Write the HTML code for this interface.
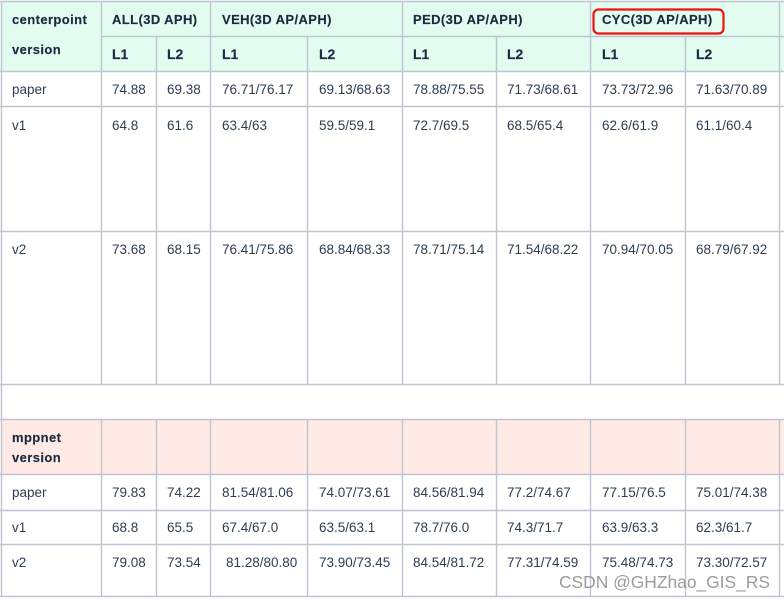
<!DOCTYPE html>
<html><head><meta charset="utf-8"><style>
html,body{margin:0;padding:0;background:#fff;width:784px;height:600px;overflow:hidden}
svg{display:block}
text{font-family:"Liberation Sans",sans-serif;font-size:13.5px;fill:#2c3e50}
.b{font-weight:700;font-size:13px;fill:#1b2a41;letter-spacing:.4px;stroke:#1b2a41;stroke-width:.15px}
.l{font-size:14px;letter-spacing:0}
</style></head><body>
<svg width="784" height="600" viewBox="0 0 784 600" xmlns="http://www.w3.org/2000/svg">
<rect x="1" y="1" width="783" height="70" fill="#e3fcf0"/>
<rect x="1" y="419" width="783" height="55" fill="#ffeae5"/>
<g stroke="#c0c4d0" stroke-width="1.4">
<path d="M1.5 1V597M101.5 1V384M156.5 36V384M210.5 1V384M307.5 36V384M402.5 1V384M496.5 36V384M590.5 1V384M685.5 36V384M779.5 1V384"/>
<path d="M101.5 419V597M156.5 419V597M210.5 419V597M307.5 419V597M402.5 419V597M496.5 419V597M590.5 419V597M685.5 419V597M779.5 419V597"/>
<path d="M0 1.5H784M101 36.5H784M0 71.5H784M0 106.5H784M0 231.5H784M0 384.5H784M0 419.5H784M0 474.5H784M0 510.5H784M0 544.5H784M0 596.5H784"/>
</g>
<g class="h">
<text class="b" x="12" y="24">centerpoint</text><text class="b" x="12" y="54">version</text>
<text class="b" x="112" y="24">ALL(3D APH)</text><text class="b" x="222" y="24">VEH(3D AP/APH)</text><text class="b" x="413" y="24">PED(3D AP/APH)</text><text class="b" x="602" y="24">CYC(3D AP/APH)</text>
<text class="b l" x="112" y="59">L1</text><text class="b l" x="167" y="59">L2</text><text class="b l" x="222" y="59">L1</text><text class="b l" x="319" y="59">L2</text><text class="b l" x="413" y="59">L1</text><text class="b l" x="507" y="59">L2</text><text class="b l" x="602" y="59">L1</text><text class="b l" x="696" y="59">L2</text>
<text class="b" x="12" y="442">mppnet</text><text class="b" x="12" y="462">version</text>
</g>
<g>
<text x="12" y="94">paper</text><text x="112" y="94">74.88</text><text x="167" y="94">69.38</text><text x="222" y="94">76.71/76.17</text><text x="319" y="94">69.13/68.63</text><text x="413" y="94">78.88/75.55</text><text x="507" y="94">71.73/68.61</text><text x="602" y="94">73.73/72.96</text><text x="696" y="94">71.63/70.89</text>
<text x="12" y="130">v1</text><text x="112" y="130">64.8</text><text x="167" y="130">61.6</text><text x="222" y="130">63.4/63</text><text x="319" y="130">59.5/59.1</text><text x="413" y="130">72.7/69.5</text><text x="507" y="130">68.5/65.4</text><text x="602" y="130">62.6/61.9</text><text x="696" y="130">61.1/60.4</text>
<text x="12" y="254">v2</text><text x="112" y="254">73.68</text><text x="167" y="254">68.15</text><text x="222" y="254">76.41/75.86</text><text x="319" y="254">68.84/68.33</text><text x="413" y="254">78.71/75.14</text><text x="507" y="254">71.54/68.22</text><text x="602" y="254">70.94/70.05</text><text x="696" y="254">68.79/67.92</text>
<text x="12" y="497">paper</text><text x="112" y="497">79.83</text><text x="167" y="497">74.22</text><text x="222" y="497">81.54/81.06</text><text x="319" y="497">74.07/73.61</text><text x="413" y="497">84.56/81.94</text><text x="507" y="497">77.2/74.67</text><text x="602" y="497">77.15/76.5</text><text x="696" y="497">75.01/74.38</text>
<text x="12" y="532">v1</text><text x="112" y="532">68.8</text><text x="167" y="532">65.5</text><text x="222" y="532">67.4/67.0</text><text x="319" y="532">63.5/63.1</text><text x="413" y="532">78.7/76.0</text><text x="507" y="532">74.3/71.7</text><text x="602" y="532">63.9/63.3</text><text x="696" y="532">62.3/61.7</text>
<text x="12" y="567">v2</text><text x="112" y="567">79.08</text><text x="167" y="567">73.54</text><text x="226" y="567">81.28/80.80</text><text x="319" y="567">73.90/73.45</text><text x="413" y="567">84.54/81.72</text><text x="507" y="567">77.31/74.59</text><text x="602" y="567">75.48/74.73</text><text x="696" y="567">73.30/72.57</text>
</g>
<rect x="593.5" y="9.5" width="130" height="24" rx="5" fill="none" stroke="#f01010" stroke-width="2.2"/>
<text x="559" y="588" style="font-size:17.4px;fill:#8b8b8b;fill-opacity:.85">CSDN @GHZhao_GIS_RS</text>
</svg>
</body></html>
